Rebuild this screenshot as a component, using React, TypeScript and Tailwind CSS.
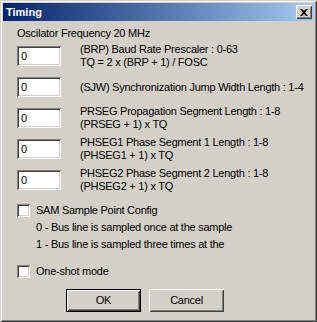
import React from 'react';

const raised = 'shadow-[inset_1px_1px_#ffffff,inset_-1px_-1px_#404040,inset_2px_2px_#d4d0c8,inset_-2px_-2px_#808080]';
const sunken = 'shadow-[inset_1px_1px_#808080,inset_-1px_-1px_#ffffff,inset_2px_2px_#404040,inset_-2px_-2px_#d4d0c8]';

function EditBox({ value }: { value: string }) {
  return (
    <div className={`w-[44px] h-[20px] shrink-0 bg-white ${sunken} pl-[4px] flex items-center text-black`}>
      {value}
    </div>
  );
}

function CheckBox() {
  return <div className={`w-[13px] h-[13px] shrink-0 bg-white ${sunken}`} />;
}

function Row({ lines }: { lines: string[] }) {
  return (
    <div className="flex items-center h-[20px] mb-[11px]">
      <EditBox value="0" />
      <div className="ml-[19px] leading-[13px] whitespace-nowrap">
        {lines.map((l, i) => (
          <div key={i}>{l}</div>
        ))}
      </div>
    </div>
  );
}

export default function App() {
  const rows = [
    ['(BRP) Baud Rate Prescaler : 0-63', 'TQ = 2 x (BRP + 1) / FOSC'],
    ['(SJW) Synchronization Jump Width Length : 1-4'],
    ['PRSEG Propagation Segment Length : 1-8', '(PRSEG + 1) x TQ'],
    ['PHSEG1 Phase Segment 1 Length : 1-8', '(PHSEG1 + 1) x TQ'],
    ['PHSEG2 Phase Segment 2 Length : 1-8', '(PHSEG2 + 1) x TQ'],
  ];

  return (
    <div
      className={`w-[317px] h-[322px] bg-[#d4d0c8] p-[3px] flex flex-col text-[11px] tracking-[-0.25px] text-black overflow-hidden shadow-[inset_1px_1px_#d4d0c8,inset_-1px_-1px_#404040,inset_2px_2px_#ffffff,inset_-2px_-2px_#808080]`}
      style={{ fontFamily: '"Liberation Sans", Arial, sans-serif' }}
    >
      {/* title bar */}
      <div className="h-[18px] flex items-center justify-between bg-gradient-to-r from-[#0a246a] to-[#a6caf0] pl-[3px] pr-[2px]">
        <span className="text-white font-bold tracking-normal">Timing</span>
        <div className={`w-[16px] h-[14px] bg-[#d4d0c8] ${raised} flex items-center justify-center`}>
          <svg width="8" height="7" viewBox="0 0 8 7">
            <path d="M0 0h2l2 2 2-2h2L5 3.5 8 7H6L4 5 2 7H0l3-3.5z" fill="#000" />
          </svg>
        </div>
      </div>

      <div className="pl-[14px] pt-[6px] flex flex-col">
        <div className="leading-[13px] mb-[6px]">Oscilator Frequency 20 MHz</div>

        {rows.map((r, i) => (
          <Row key={i} lines={r} />
        ))}

        <div className="mt-[1px] flex flex-col">
          <div className="flex items-center h-[17px]">
            <CheckBox />
            <span className="ml-[6px]">SAM Sample Point Config</span>
          </div>
          <div className="h-[17px] flex items-center pl-[19px]">0 - Bus line is sampled once at the sample</div>
          <div className="h-[17px] flex items-center pl-[19px]">1 - Bus line is sampled three times at the</div>
          <div className="flex items-center h-[17px] mt-[10px]">
            <CheckBox />
            <span className="ml-[6px]">One-shot mode</span>
          </div>
        </div>

        <div className="flex gap-[8px] pl-[49px] mt-[9px]">
          <div className="w-[75px] h-[23px] border border-black bg-[#d4d0c8]">
            <div className={`w-full h-full flex items-center justify-center ${raised}`}>OK</div>
          </div>
          <div className={`w-[75px] h-[23px] bg-[#d4d0c8] flex items-center justify-center ${raised}`}>Cancel</div>
        </div>
      </div>
    </div>
  );
}
